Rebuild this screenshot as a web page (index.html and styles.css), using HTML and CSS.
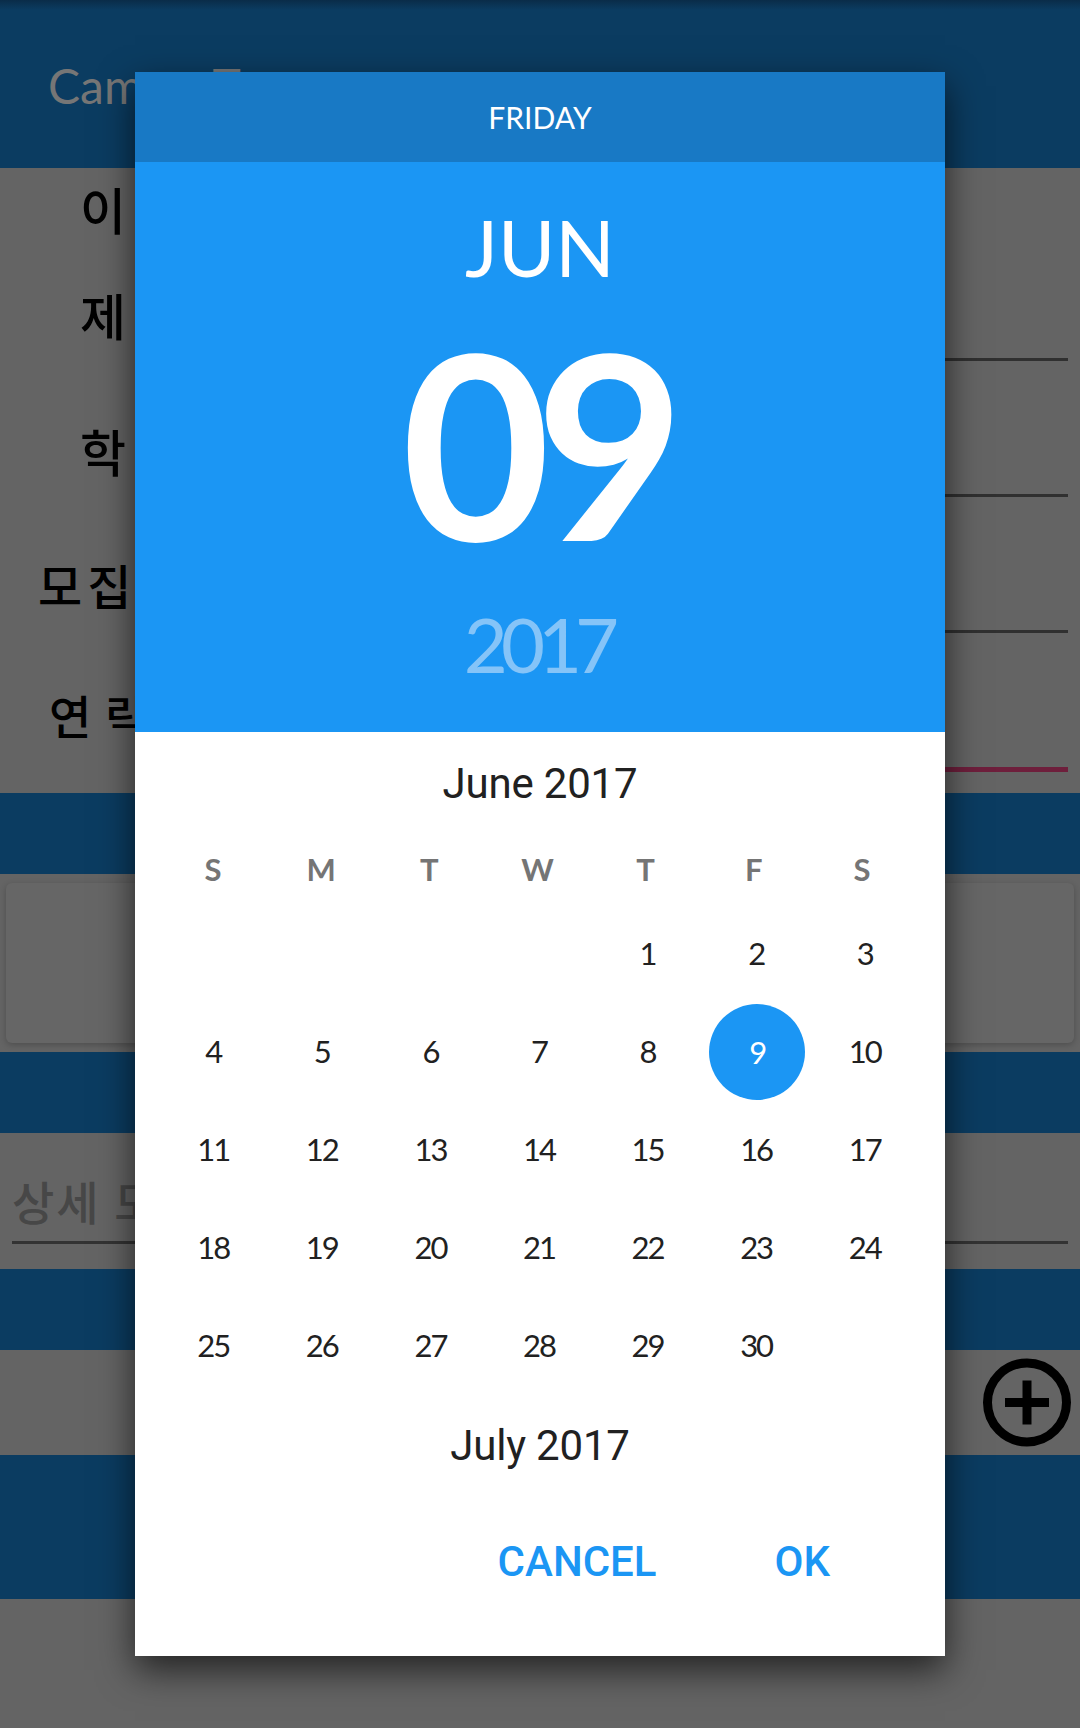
FILE: index.html
```html
<!doctype html>
<html lang="ko">
<head>
<meta charset="utf-8">
<title>CampusTown</title>
<link rel="stylesheet" href="styles.css">
</head>
<body>
<div class="page">
	<div class="appbar"><span class="appname">CampusTown</span></div>

	<div class="form">
		<div class="row row-first"><span class="label">이름</span></div>
		<div class="row"><span class="label">제목</span><i class="line"></i></div>
		<div class="row"><span class="label">학교</span><i class="line"></i></div>
		<div class="row"><span class="label label-long">모집인원</span><i class="line"></i></div>
		<div class="row"><span class="label label-spaced">연락처</span><i class="line line-focus"></i></div>
	</div>

	<div class="band"></div>
	<div class="cardwrap"><div class="card"></div></div>
	<div class="band"></div>
	<div class="detail"><span class="hint">상세 모집 내용</span></div>
	<div class="band"></div>
	<div class="addrow">
		<svg class="addicon" width="88" height="89" viewBox="0 0 88 89">
			<circle cx="44" cy="44.5" r="39.5" fill="none" stroke="#000" stroke-width="9"/>
			<path d="M22 44.5H66M44 22.5V66.5" fill="none" stroke="#000" stroke-width="9"/>
		</svg>
	</div>
	<div class="band band-tall"></div>

	<div class="dialog">
		<div class="dayname">FRIDAY</div>
		<div class="datebox">
			<div class="month">JUN</div>
			<div class="daynum">09</div>
			<div class="year">2017</div>
		</div>
		<div class="monthtitle">June 2017</div>
		<div class="week">
			<span>S</span><span>M</span><span>T</span><span>W</span><span>T</span><span>F</span><span>S</span>
		</div>
		<div class="days">
			<span></span><span></span><span></span><span></span><span>1</span><span>2</span><span>3</span>
			<span>4</span><span>5</span><span>6</span><span>7</span><span>8</span><span class="picked">9</span><span>10</span>
			<span>11</span><span>12</span><span>13</span><span>14</span><span>15</span><span>16</span><span>17</span>
			<span>18</span><span>19</span><span>20</span><span>21</span><span>22</span><span>23</span><span>24</span>
			<span>25</span><span>26</span><span>27</span><span>28</span><span>29</span><span>30</span><span></span>
		</div>
		<div class="monthtitle monthtitle-next">July 2017</div>
		<div class="actions">
			<a href="#">CANCEL</a>
			<a href="#">OK</a>
		</div>
	</div>
</div>
</body>
</html>
```

FILE: styles.css
```css
* {padding:0;margin:0;box-sizing:border-box;}
body {background:#646464;font-family:"Lato","Noto Sans CJK KR",sans-serif;}
.page {position:relative;width:1080px;height:1728px;overflow:hidden;background:#646464;}

.appbar {height:168px;padding:56px 0 0 48px;background:linear-gradient(#0a2c48,#0b3c61 10px);}
.appname {font-size:48px;line-height:60px;color:#767676;}

.form {height:625px;}
.row {display:flex;align-items:flex-end;height:136px;padding-bottom:15px;}
.row-first {height:72px;padding-bottom:0;}
.label {flex:none;width:260px;margin-bottom:16px;padding-left:80px;font-size:50px;line-height:56px;font-weight:500;color:#000;letter-spacing:7px;white-space:nowrap;}
.label-long {padding-left:38px;margin-bottom:18px;font-size:48px;letter-spacing:5px;}
.label-spaced {padding-left:49px;margin-bottom:24px;font-size:46px;letter-spacing:14px;}
.row-first .label {margin-bottom:1px;}
.line {flex:1;height:3px;margin-right:12px;background:#303030;}
.line-focus {height:5px;margin-bottom:-3px;background:#6e1f3c;}

.band {height:81px;background:#0b3c61;}
.band-tall {height:144px;}

.cardwrap {height:178px;padding:9px 6px;}
.card {height:160px;border-radius:6px;background:#666;box-shadow:0 2px 6px rgba(0,0,0,.22);}

.detail {height:136px;margin:0 12px;padding-top:42px;}
.detail::after {content:"";display:block;height:3px;margin-top:10px;background:#333;}
.hint {display:block;height:56px;font-size:46px;line-height:56px;color:#474747;font-weight:500;letter-spacing:2px;white-space:nowrap;}

.addrow {display:flex;justify-content:flex-end;height:105px;padding:8px 9px 0 0;}

.dialog {position:absolute;left:135px;top:72px;width:810px;height:1584px;background:#fff;box-shadow:0 14px 34px rgba(0,0,0,.65);}
.dayname {height:90px;background:#1879c5;color:#fff;font-size:30px;line-height:90px;text-align:center;}
.datebox {height:570px;background:#1b96f4;color:#fff;text-align:center;}
.month {height:174px;padding-top:41px;font-size:78px;line-height:88px;}
.daynum {height:236px;font-size:257px;line-height:212px;font-weight:700;letter-spacing:-15px;text-indent:-9px;}
.year {height:160px;padding-top:32px;font-size:76px;line-height:80px;letter-spacing:-7px;text-indent:-4px;color:#85c4f8;}

.monthtitle {height:103px;padding-top:2px;font-family:"Roboto",sans-serif;font-size:42px;line-height:100px;color:#212121;text-align:center;letter-spacing:-.2px;}
.monthtitle-next {height:100px;}

.week {display:grid;grid-template-columns:repeat(7,1fr);height:70px;padding:0 29px 0 24px;font-size:31px;line-height:68px;font-weight:700;color:#757575;text-align:center;}

.days {display:grid;grid-template-columns:repeat(7,1fr);grid-auto-rows:98px;padding:0 26px 0 24px;font-size:31px;color:#212121;margin-top:-1px;}
.days span {display:flex;align-items:center;justify-content:center;letter-spacing:-2px;}
.days .picked {justify-self:center;width:96px;height:96px;margin-top:2px;margin-left:2px;border-radius:50%;background:#1b96f4;color:#fff;}

.actions {display:flex;justify-content:flex-end;gap:118px;padding:32px 115px 0 0;}
.actions a {font-family:"Roboto",sans-serif;font-size:42px;line-height:72px;font-weight:500;color:#1b96f4;text-decoration:none;}
```
